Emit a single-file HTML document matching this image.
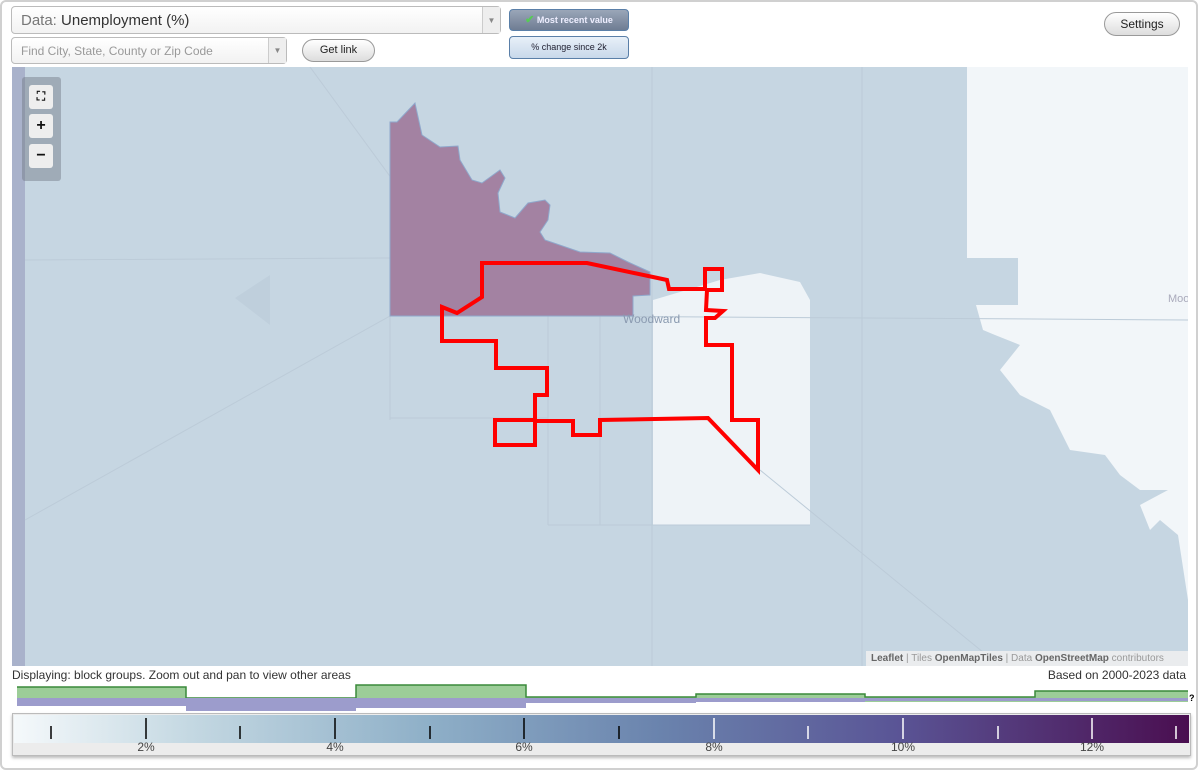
<!DOCTYPE html>
<html><head><meta charset="utf-8"><style>
*{margin:0;padding:0;box-sizing:border-box}
body{width:1200px;height:771px;background:#fff;font-family:"Liberation Sans",Arial,sans-serif;position:relative;overflow:hidden}
.frame{position:absolute;left:0;top:0;width:1198px;height:770px;border:2px solid #d0d0d0;border-radius:6px}
.sel{position:absolute;border:1px solid #bbb;border-radius:4px;background:linear-gradient(#fff,#f2f2f2);color:#333}
.sel .arr{position:absolute;right:0;top:0;bottom:0;width:18px;border-left:1px solid #ccc;background:#eee;color:#888;font-size:8px;text-align:center}
.btn{position:absolute;border:1px solid #999;border-radius:12px;background:linear-gradient(#fff,#ddd);font-size:11px;color:#222;text-align:center}
.tog{position:absolute;border:1px solid #5a7fa8;border-radius:4px;font-size:9px;text-align:center}
.zb{position:absolute;left:29px;width:24px;height:24px;background:#eee;border-radius:3px;text-align:center;font-weight:bold;font-size:16px;line-height:23px;color:#111}
</style></head><body>
<div class="frame"></div>
<div class="sel" style="left:11px;top:6px;width:490px;height:28px;font-size:15px;line-height:27px;padding-left:9px"><span style="color:#777">Data:</span> Unemployment (%)<div class="arr" style="line-height:27px">▼</div></div>
<div class="sel" style="left:11px;top:37px;width:276px;height:27px;font-size:12px;line-height:26px;padding-left:9px;color:#999">Find City, State, County or Zip Code<div class="arr" style="line-height:26px">▼</div></div>
<div class="btn" style="left:302px;top:39px;width:73px;height:23px;line-height:21px">Get link</div>
<div class="tog" style="left:509px;top:9px;width:120px;height:22px;line-height:20px;background:linear-gradient(#9aa6b8,#6f7d93);color:#eef;font-weight:bold"><span style="color:#5c5;font-size:11px">✔</span> Most recent value</div>
<div class="tog" style="left:509px;top:36px;width:120px;height:23px;line-height:21px;background:linear-gradient(#e8f0f8,#c8d8ea);color:#223">% change since 2k</div>
<div class="btn" style="left:1104px;top:12px;width:76px;height:24px;line-height:22px;font-size:12px">Settings</div>

<svg style="position:absolute;left:12px;top:67px" width="1176" height="599" viewBox="12 67 1176 599">
<rect x="12" y="67" width="1176" height="599" fill="#c6d6e2"/>
<rect x="12" y="67" width="13" height="599" fill="#a9b2cb"/>
<polygon points="967,67 1188,67 1188,600 1178,535 1160,520 1150,530 1140,505 1168,490 1140,490 1120,475 1105,455 1070,450 1050,410 1020,395 1000,370 1020,345 995,335 983,330 976,305 1018,305 1018,258 967,258" fill="#f2f6f9"/>
<polygon points="653,300 680,292 720,280 760,273 800,282 810,300 810,525 653,525" fill="#eef3f7"/>
<g stroke="#bccbd8" stroke-width="1" fill="none">
<line x1="25" y1="260" x2="390" y2="258"/><line x1="390" y1="315" x2="1188" y2="320"/>
<line x1="310" y1="67" x2="400" y2="190"/><line x1="25" y1="520" x2="390" y2="316"/>
<line x1="548" y1="316" x2="548" y2="525"/><line x1="600" y1="316" x2="600" y2="525"/>
<line x1="390" y1="316" x2="390" y2="420"/><line x1="390" y1="418" x2="548" y2="418"/>
<line x1="548" y1="525" x2="810" y2="525"/><line x1="760" y1="470" x2="1000" y2="666"/>
<line x1="862" y1="67" x2="862" y2="666"/><line x1="652" y1="67" x2="652" y2="666"/>
</g>
<polygon points="235,298 270,275 270,325" fill="#bfcfdc"/>
<polygon points="390,122 397,122 415,103 422,135 440,147 458,146 460,160 472,180 482,183 500,170 505,178 498,193 500,212 515,218 528,203 545,200 550,205 548,220 540,232 545,240 580,252 610,253 628,262 650,272 650,295 633,296 633,316 390,316" fill="#a382a2" stroke="#8fa8cc" stroke-width="1"/>
<text x="623" y="323" font-size="12" fill="#8a9ab0" font-family="Liberation Sans">Woodward</text>
<text x="1168" y="302" font-size="11" fill="#aab" font-family="Liberation Sans">Moo</text>
<polygon points="482,263 587,263 667,280 669,289 705,289 705,269 722,269 722,290 707,290 706,310 723,311 715,318 706,318 706,345 732,345 732,420 758,420 758,470 708,418 600,420 600,435 573,435 573,421 535,421 535,445 495,445 495,420 535,420 535,395 547,395 547,368 496,368 496,341 442,341 442,307 457,313 482,297" fill="none" stroke="#f00" stroke-width="4" stroke-linejoin="miter"/>
</svg>
<div style="position:absolute;left:22px;top:77px;width:39px;height:104px;background:rgba(110,120,130,.45);border-radius:3px"></div>
<div class="zb" style="top:85px;font-size:12px">⛶</div>
<div class="zb" style="top:114px">+</div>
<div class="zb" style="top:144px">−</div>
<div style="position:absolute;left:866px;top:651px;width:322px;height:15px;background:rgba(240,240,240,.85);font-size:10px;line-height:15px;padding-left:5px;color:#999"><b style="color:#666">Leaflet</b> | Tiles <b style="color:#666">OpenMapTiles</b> | Data <b style="color:#666">OpenStreetMap</b> contributors</div>
<div style="position:absolute;left:12px;top:668px;font-size:12px;color:#333">Displaying: block groups. Zoom out and pan to view other areas</div>
<div style="position:absolute;right:14px;top:668px;font-size:12px;color:#333">Based on 2000-2023 data</div>
<svg style="position:absolute;left:0;top:684px" width="1200" height="30">
<path d="M17,18 V3 H186 V18 Z M356,18 V1 H526 V18 Z M696,18 V10 H865 V18 Z M1035,18 V7 H1188 V18 Z M186,18 V14 H356 V18 Z M526,18 V13 H696 V18 Z M865,18 V13 H1035 V18 Z" fill="#9ccd98"/>
<path d="M17,3 H186 V14 H356 V1 H526 V13 H696 V10 H865 V13 H1035 V7 H1188" stroke="#3a8a3a" stroke-width="1.5" fill="none"/>
<rect x="17" y="14" width="169" height="8" fill="#9c9ccc"/><rect x="186" y="14" width="170" height="13" fill="#9c9ccc"/>
<rect x="356" y="14" width="170" height="10" fill="#9c9ccc"/><rect x="526" y="14" width="170" height="5" fill="#9c9ccc"/>
<rect x="696" y="14" width="169" height="4" fill="#9c9ccc"/><rect x="865" y="14" width="170" height="3" fill="#9c9ccc"/><rect x="1035" y="14" width="153" height="3" fill="#9c9ccc"/>
<text x="1189" y="17" font-size="9" font-weight="bold">?</text>
</svg>
<div style="position:absolute;left:12px;top:713px;width:1179px;height:43px;border:1px solid #bbb;box-shadow:0 2px 3px #bbb;background:#ececec">
<div style="position:absolute;left:1px;top:1px;right:1px;height:28px;background:linear-gradient(90deg,#f5f9fb,#c4d8e2 15%,#8fb0c8 35%,#6a83ad 55%,#5a5596 75%,#4a0e50)"></div>
</div>
<svg style="position:absolute;left:0;top:714px" width="1200" height="42">
<g stroke="#000" stroke-width="1.5"><line x1="51" y1="12" x2="51" y2="25"/><line x1="146" y1="4" x2="146" y2="25"/><line x1="240" y1="12" x2="240" y2="25"/><line x1="335" y1="4" x2="335" y2="25"/><line x1="430" y1="12" x2="430" y2="25"/><line x1="524" y1="4" x2="524" y2="25"/><line x1="619" y1="12" x2="619" y2="25"/></g>
<g stroke="#fff" stroke-width="1.5"><line x1="714" y1="4" x2="714" y2="25"/><line x1="808" y1="12" x2="808" y2="25"/><line x1="903" y1="4" x2="903" y2="25"/><line x1="998" y1="12" x2="998" y2="25"/><line x1="1092" y1="4" x2="1092" y2="25"/><line x1="1176" y1="12" x2="1176" y2="25"/></g>
<g font-size="12" fill="#444" text-anchor="middle" font-family="Liberation Sans"><text x="146" y="37">2%</text><text x="335" y="37">4%</text><text x="524" y="37">6%</text><text x="714" y="37">8%</text><text x="903" y="37">10%</text><text x="1092" y="37">12%</text></g>
</svg>
</body></html>
